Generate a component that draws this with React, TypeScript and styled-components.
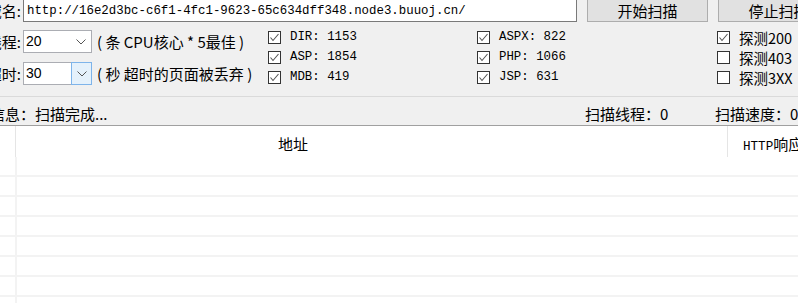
import React from "react";
import styled, { createGlobalStyle } from "styled-components";

const CJK = `"Noto Sans CJK SC", "Microsoft YaHei", sans-serif`;
const MONO = `"Liberation Mono", "Noto Sans CJK SC", monospace`;

const GlobalStyle = createGlobalStyle`
  html, body { margin: 0; padding: 0; background: #f0f0f0; overflow: hidden; }
  body { width: 798px; height: 303px; }
  * { box-sizing: border-box; }
`;

const Window = styled.div`
  margin: -1px 0 0 -24px;
  width: 880px;
  font-family: ${CJK};
  color: #000;
`;

const TopRow = styled.div`
  display: flex;
  align-items: center;
  height: 23px;
`;

const FieldLabel = styled.div`
  width: 45px;
  flex: none;
  margin-right: 2px;
  text-align: right;
  white-space: nowrap;
  font-size: 15px;
  line-height: 23px;
`;

const UrlInput = styled.input`
  width: 554px;
  height: 23px;
  flex: none;
  border: 1px solid #7a7a7a;
  background: #fff;
  padding: 0 0 0 3px;
  margin: 0;
  font-family: ${MONO};
  font-size: 12.4px;
  color: #000;
  outline: none;
`;

const Button = styled.button`
  width: 121px;
  height: 23px;
  flex: none;
  margin: 0 0 0 10px;
  padding: 0;
  background: #e1e1e1;
  border: 1px solid #adadad;
  font-family: ${CJK};
  font-size: 15px;
  line-height: 21px;
  color: #000;
`;

const Options = styled.div`
  display: flex;
  margin-top: 5px;
  height: 60px;
`;

const ThreadBlock = styled.div`
  width: 292px;
  flex: none;
  display: flex;
  flex-direction: column;
  gap: 9px;
  padding-top: 3px;
`;

const ComboRow = styled.div`
  display: flex;
  align-items: center;
  height: 23px;
`;

const Combo = styled.div`
  width: 69px;
  height: 23px;
  flex: none;
  display: flex;
  border: 1px solid #abadb3;
  background: #fff;
`;

const ComboValue = styled.div`
  flex: 1;
  padding-left: 2px;
  font-family: "Liberation Sans", Arial, sans-serif;
  font-size: 14px;
  line-height: 21px;
`;

const ComboButton = styled.div<{ $hot?: boolean }>`
  width: ${(p) => (p.$hot ? "21px" : "20px")};
  display: flex;
  align-items: center;
  justify-content: center;
  background: ${(p) => (p.$hot ? "#e5f1fb" : "transparent")};
  border: ${(p) => (p.$hot ? "1px solid #7eb4ea" : "none")};
  margin: ${(p) => (p.$hot ? "-1px -1px -1px 0" : "0")};
`;

const Hint = styled.div`
  margin-left: 5px;
  font-size: 15px;
  white-space: pre;
`;

const CheckGrid = styled.div`
  display: grid;
  grid-template-columns: 209px 240px auto;
  grid-template-rows: repeat(3, 20px);
  grid-auto-flow: column;
`;

const CheckItem = styled.div`
  display: flex;
  align-items: center;
  gap: 9px;
  white-space: nowrap;
`;

const Box = styled.span`
  width: 13px;
  height: 13px;
  flex: none;
  border: 1px solid #333;
  background: #fff;
  display: flex;
`;

const MonoText = styled.span`
  font-family: ${MONO};
  font-size: 12.4px;
`;

const CjkText = styled.span`
  font-size: 14.5px;
`;

const StatusBar = styled.div`
  margin-top: 9px;
  height: 30px;
  border-top: 1px solid #dadada;
  border-bottom: 1px solid #a0a0a0;
  padding: 8px 0 0 14px;
  display: flex;
  font-size: 15px;
  line-height: 18px;
`;

const StatusItem = styled.div<{ $w?: number }>`
  width: ${(p) => (p.$w ? `${p.$w}px` : "auto")};
  flex: none;
  white-space: nowrap;
`;

const ListView = styled.div`
  background: #fff;
  height: 200px;
`;

const HeaderRow = styled.div`
  display: flex;
  height: 31px;
`;

const HeaderCell = styled.div<{ $w?: number; $pad?: number }>`
  width: ${(p) => (p.$w ? `${p.$w}px` : "auto")};
  flex: ${(p) => (p.$w ? "none" : "1")};
  border-right: 1px solid #e5e5e5;
  padding: 4px 0 0 ${(p) => p.$pad ?? 0}px;
  font-size: 15px;
  line-height: 27px;
  white-space: nowrap;
`;

const HeaderMono = styled.span`
  font-family: ${MONO};
  font-size: 12.6px;
`;

const Row = styled.div`
  display: flex;
  height: 20px;
  border-bottom: 2px solid #f3f3f3;
`;

const RowCell = styled.div<{ $w?: number }>`
  width: ${(p) => (p.$w ? `${p.$w}px` : "auto")};
  flex: ${(p) => (p.$w ? "none" : "1")};
  border-right: ${(p) => (p.$w ? "2px solid #f3f3f3" : "none")};
`;

const Chevron = () => (
  <svg width="10" height="6" viewBox="0 0 10 6">
    <polyline points="0.5,0.5 5,5 9.5,0.5" fill="none" stroke="#555" strokeWidth="1" />
  </svg>
);

const Check = () => (
  <svg width="11" height="11" viewBox="0 0 11 11">
    <polyline points="1.5,5.5 4,8.5 9.5,2" fill="none" stroke="#555" strokeWidth="1.1" />
  </svg>
);

const checks: { label: React.ReactNode; checked: boolean }[] = [
  { label: <MonoText>DIR: 1153</MonoText>, checked: true },
  { label: <MonoText>ASP: 1854</MonoText>, checked: true },
  { label: <MonoText>MDB: 419</MonoText>, checked: true },
  { label: <MonoText>ASPX: 822</MonoText>, checked: true },
  { label: <MonoText>PHP: 1066</MonoText>, checked: true },
  { label: <MonoText>JSP: 631</MonoText>, checked: true },
  { label: <CjkText>探测200</CjkText>, checked: true },
  { label: <CjkText>探测403</CjkText>, checked: false },
  { label: <CjkText>探测3XX</CjkText>, checked: false },
];

export default function App() {
  return (
    <>
      <GlobalStyle />
      <Window>
        <TopRow>
          <FieldLabel>域名:</FieldLabel>
          <UrlInput readOnly value="http://16e2d3bc-c6f1-4fc1-9623-65c634dff348.node3.buuoj.cn/" />
          <Button>开始扫描</Button>
          <Button>停止扫描</Button>
        </TopRow>
        <Options>
          <ThreadBlock>
            <ComboRow>
              <FieldLabel>线程:</FieldLabel>
              <Combo>
                <ComboValue>20</ComboValue>
                <ComboButton>
                  <Chevron />
                </ComboButton>
              </Combo>
              <Hint>{"( 条 CPU核心 * 5最佳 )"}</Hint>
            </ComboRow>
            <ComboRow>
              <FieldLabel>超时:</FieldLabel>
              <Combo>
                <ComboValue>30</ComboValue>
                <ComboButton $hot>
                  <Chevron />
                </ComboButton>
              </Combo>
              <Hint>{"( 秒 超时的页面被丢弃 )"}</Hint>
            </ComboRow>
          </ThreadBlock>
          <CheckGrid>
            {checks.map((c, i) => (
              <CheckItem key={i}>
                <Box>{c.checked && <Check />}</Box>
                {c.label}
              </CheckItem>
            ))}
          </CheckGrid>
        </Options>
        <StatusBar>
          <StatusItem $w={595}>信息：扫描完成...</StatusItem>
          <StatusItem $w={130}>扫描线程：0</StatusItem>
          <StatusItem>扫描速度：0</StatusItem>
        </StatusBar>
        <ListView>
          <HeaderRow>
            <HeaderCell $w={40} />
            <HeaderCell $w={712} $pad={262}>地址</HeaderCell>
            <HeaderCell $pad={15}>
              <HeaderMono>HTTP</HeaderMono>响应码
            </HeaderCell>
          </HeaderRow>
          {Array.from({ length: 8 }).map((_, i) => (
            <Row key={i}>
              <RowCell $w={41} />
              <RowCell />
            </Row>
          ))}
        </ListView>
      </Window>
    </>
  );
}
